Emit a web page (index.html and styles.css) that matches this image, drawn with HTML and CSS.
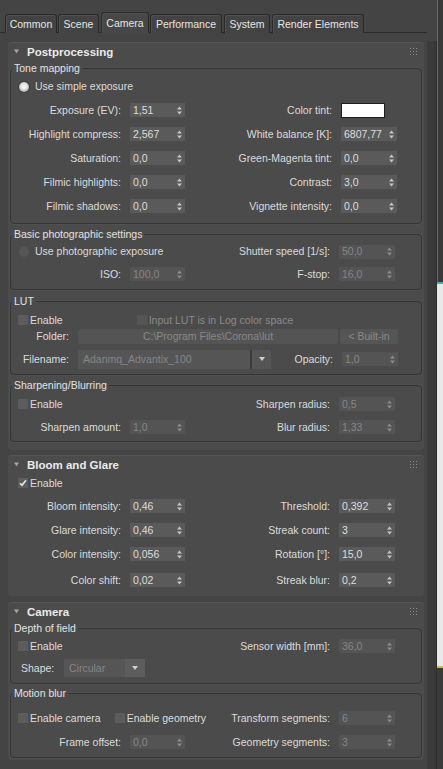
FILE: index.html
```html
<!DOCTYPE html>
<html>
<head>
<meta charset="utf-8">
<link rel="stylesheet" href="styles.css">
</head>
<body>
<div class="app">
  <div class="main">
    <div class="tabbar">
      <div class="tab t-common">Common</div>
      <div class="tab t-scene">Scene</div>
      <div class="tab t-camera active">Camera</div>
      <div class="tab t-perf">Performance</div>
      <div class="tab t-sys">System</div>
      <div class="tab t-re">Render Elements</div>
    </div>

    <section class="rollout r-post">
      <header class="rhead">
        <svg class="tri" viewBox="0 0 6 5"><path d="M0 0H6L3 4.5Z"/></svg>
        <span class="rtitle">Postprocessing</span>
        <svg class="grip" viewBox="0 0 7 7"><g><rect x="0" y="0" width="1" height="1"/><rect x="3" y="0" width="1" height="1"/><rect x="6" y="0" width="1" height="1"/><rect x="0" y="3" width="1" height="1"/><rect x="3" y="3" width="1" height="1"/><rect x="6" y="3" width="1" height="1"/><rect x="0" y="6" width="1" height="1"/><rect x="3" y="6" width="1" height="1"/><rect x="6" y="6" width="1" height="1"/></g></svg>
      </header>

      <fieldset class="group g-tone">
        <legend>Tone mapping</legend>
        <div class="row h23">
          <label class="opt span2"><span class="radio on"></span>Use simple exposure</label>
        </div>
        <div class="row">
          <span class="lbl">Exposure (EV):</span>
          <div class="spin"><span>1,51</span><svg class="arr" viewBox="0 0 5 9"><path d="M0 3.5L2.5 0.5L5 3.5ZM0 5.5L2.5 8.5L5 5.5Z"/></svg></div>
          <span class="lbl">Color tint:</span>
          <div class="swatch"></div>
        </div>
        <div class="row">
          <span class="lbl">Highlight compress:</span>
          <div class="spin"><span>2,567</span><svg class="arr" viewBox="0 0 5 9"><path d="M0 3.5L2.5 0.5L5 3.5ZM0 5.5L2.5 8.5L5 5.5Z"/></svg></div>
          <span class="lbl">White balance [K]:</span>
          <div class="spin"><span>6807,77</span><svg class="arr" viewBox="0 0 5 9"><path d="M0 3.5L2.5 0.5L5 3.5ZM0 5.5L2.5 8.5L5 5.5Z"/></svg></div>
        </div>
        <div class="row">
          <span class="lbl">Saturation:</span>
          <div class="spin"><span>0,0</span><svg class="arr" viewBox="0 0 5 9"><path d="M0 3.5L2.5 0.5L5 3.5ZM0 5.5L2.5 8.5L5 5.5Z"/></svg></div>
          <span class="lbl">Green-Magenta tint:</span>
          <div class="spin"><span>0,0</span><svg class="arr" viewBox="0 0 5 9"><path d="M0 3.5L2.5 0.5L5 3.5ZM0 5.5L2.5 8.5L5 5.5Z"/></svg></div>
        </div>
        <div class="row">
          <span class="lbl">Filmic highlights:</span>
          <div class="spin"><span>0,0</span><svg class="arr" viewBox="0 0 5 9"><path d="M0 3.5L2.5 0.5L5 3.5ZM0 5.5L2.5 8.5L5 5.5Z"/></svg></div>
          <span class="lbl">Contrast:</span>
          <div class="spin"><span>3,0</span><svg class="arr" viewBox="0 0 5 9"><path d="M0 3.5L2.5 0.5L5 3.5ZM0 5.5L2.5 8.5L5 5.5Z"/></svg></div>
        </div>
        <div class="row">
          <span class="lbl">Filmic shadows:</span>
          <div class="spin"><span>0,0</span><svg class="arr" viewBox="0 0 5 9"><path d="M0 3.5L2.5 0.5L5 3.5ZM0 5.5L2.5 8.5L5 5.5Z"/></svg></div>
          <span class="lbl">Vignette intensity:</span>
          <div class="spin"><span>0,0</span><svg class="arr" viewBox="0 0 5 9"><path d="M0 3.5L2.5 0.5L5 3.5ZM0 5.5L2.5 8.5L5 5.5Z"/></svg></div>
        </div>
      </fieldset>

      <fieldset class="group g-basic">
        <legend>Basic photographic settings</legend>
        <div class="row h21">
          <label class="opt span2"><span class="radio"></span>Use photographic exposure</label>
          <span class="lbl">Shutter speed [1/s]:</span>
          <div class="spin off"><span>50,0</span><svg class="arr" viewBox="0 0 5 9"><path d="M0 3.5L2.5 0.5L5 3.5ZM0 5.5L2.5 8.5L5 5.5Z"/></svg></div>
        </div>
        <div class="row">
          <span class="lbl">ISO:</span>
          <div class="spin off"><span>100,0</span><svg class="arr" viewBox="0 0 5 9"><path d="M0 3.5L2.5 0.5L5 3.5ZM0 5.5L2.5 8.5L5 5.5Z"/></svg></div>
          <span class="lbl">F-stop:</span>
          <div class="spin off"><span>16,0</span><svg class="arr" viewBox="0 0 5 9"><path d="M0 3.5L2.5 0.5L5 3.5ZM0 5.5L2.5 8.5L5 5.5Z"/></svg></div>
        </div>
      </fieldset>

      <fieldset class="group g-lut">
        <legend>LUT</legend>
        <div class="lutrow1">
          <label class="chk"><span class="box"></span>Enable</label>
          <label class="chk dis log"><span class="box"></span>Input LUT is in Log color space</label>
        </div>
        <div class="lutrow2">
          <span class="lbl lutlbl">Folder:</span>
          <div class="field">C:\Program Files\Corona\lut</div>
          <div class="btn">&lt; Built-in</div>
        </div>
        <div class="lutrow3">
          <span class="lbl lutlbl">Filename:</span>
          <div class="combo fname"><span>Adanmq_Advantix_100</span><span class="drop"><svg viewBox="0 0 6 4"><path d="M0 0H6L3 4Z"/></svg></span></div>
          <span class="lbl oplbl">Opacity:</span>
          <div class="spin off"><span>1,0</span><svg class="arr" viewBox="0 0 5 9"><path d="M0 3.5L2.5 0.5L5 3.5ZM0 5.5L2.5 8.5L5 5.5Z"/></svg></div>
        </div>
      </fieldset>

      <fieldset class="group g-sharp">
        <legend>Sharpening/Blurring</legend>
        <div class="row">
          <label class="chk span2"><span class="box"></span>Enable</label>
          <span class="lbl">Sharpen radius:</span>
          <div class="spin off"><span>0,5</span><svg class="arr" viewBox="0 0 5 9"><path d="M0 3.5L2.5 0.5L5 3.5ZM0 5.5L2.5 8.5L5 5.5Z"/></svg></div>
        </div>
        <div class="row h22">
          <span class="lbl">Sharpen amount:</span>
          <div class="spin off"><span>1,0</span><svg class="arr" viewBox="0 0 5 9"><path d="M0 3.5L2.5 0.5L5 3.5ZM0 5.5L2.5 8.5L5 5.5Z"/></svg></div>
          <span class="lbl">Blur radius:</span>
          <div class="spin off"><span>1,33</span><svg class="arr" viewBox="0 0 5 9"><path d="M0 3.5L2.5 0.5L5 3.5ZM0 5.5L2.5 8.5L5 5.5Z"/></svg></div>
        </div>
      </fieldset>
    </section>

    <section class="rollout r-bloom">
      <header class="rhead">
        <svg class="tri" viewBox="0 0 6 5"><path d="M0 0H6L3 4.5Z"/></svg>
        <span class="rtitle">Bloom and Glare</span>
        <svg class="grip" viewBox="0 0 7 7"><g><rect x="0" y="0" width="1" height="1"/><rect x="3" y="0" width="1" height="1"/><rect x="6" y="0" width="1" height="1"/><rect x="0" y="3" width="1" height="1"/><rect x="3" y="3" width="1" height="1"/><rect x="6" y="3" width="1" height="1"/><rect x="0" y="6" width="1" height="1"/><rect x="3" y="6" width="1" height="1"/><rect x="6" y="6" width="1" height="1"/></g></svg>
      </header>
      <div class="bloom">
        <div class="row h16">
          <label class="chk span2"><span class="box checked"><svg viewBox="0 0 8 8"><path d="M1 4.2L3 6.3L7 1.2" /></svg></span>Enable</label>
        </div>
        <div class="row first">
          <span class="lbl">Bloom intensity:</span>
          <div class="spin"><span>0,46</span><svg class="arr" viewBox="0 0 5 9"><path d="M0 3.5L2.5 0.5L5 3.5ZM0 5.5L2.5 8.5L5 5.5Z"/></svg></div>
          <span class="lbl">Threshold:</span>
          <div class="spin"><span>0,392</span><svg class="arr" viewBox="0 0 5 9"><path d="M0 3.5L2.5 0.5L5 3.5ZM0 5.5L2.5 8.5L5 5.5Z"/></svg></div>
        </div>
        <div class="row">
          <span class="lbl">Glare intensity:</span>
          <div class="spin"><span>0,46</span><svg class="arr" viewBox="0 0 5 9"><path d="M0 3.5L2.5 0.5L5 3.5ZM0 5.5L2.5 8.5L5 5.5Z"/></svg></div>
          <span class="lbl">Streak count:</span>
          <div class="spin"><span>3</span><svg class="arr" viewBox="0 0 5 9"><path d="M0 3.5L2.5 0.5L5 3.5ZM0 5.5L2.5 8.5L5 5.5Z"/></svg></div>
        </div>
        <div class="row">
          <span class="lbl">Color intensity:</span>
          <div class="spin"><span>0,056</span><svg class="arr" viewBox="0 0 5 9"><path d="M0 3.5L2.5 0.5L5 3.5ZM0 5.5L2.5 8.5L5 5.5Z"/></svg></div>
          <span class="lbl">Rotation [°]:</span>
          <div class="spin"><span>15,0</span><svg class="arr" viewBox="0 0 5 9"><path d="M0 3.5L2.5 0.5L5 3.5ZM0 5.5L2.5 8.5L5 5.5Z"/></svg></div>
        </div>
        <div class="row last">
          <span class="lbl">Color shift:</span>
          <div class="spin"><span>0,02</span><svg class="arr" viewBox="0 0 5 9"><path d="M0 3.5L2.5 0.5L5 3.5ZM0 5.5L2.5 8.5L5 5.5Z"/></svg></div>
          <span class="lbl">Streak blur:</span>
          <div class="spin"><span>0,2</span><svg class="arr" viewBox="0 0 5 9"><path d="M0 3.5L2.5 0.5L5 3.5ZM0 5.5L2.5 8.5L5 5.5Z"/></svg></div>
        </div>
      </div>
    </section>

    <section class="rollout r-cam">
      <header class="rhead">
        <svg class="tri" viewBox="0 0 6 5"><path d="M0 0H6L3 4.5Z"/></svg>
        <span class="rtitle">Camera</span>
        <svg class="grip" viewBox="0 0 7 7"><g><rect x="0" y="0" width="1" height="1"/><rect x="3" y="0" width="1" height="1"/><rect x="6" y="0" width="1" height="1"/><rect x="0" y="3" width="1" height="1"/><rect x="3" y="3" width="1" height="1"/><rect x="6" y="3" width="1" height="1"/><rect x="0" y="6" width="1" height="1"/><rect x="3" y="6" width="1" height="1"/><rect x="6" y="6" width="1" height="1"/></g></svg>
      </header>
      <fieldset class="group g-dof">
        <legend>Depth of field</legend>
        <div class="row h22">
          <label class="chk span2"><span class="box"></span>Enable</label>
          <span class="lbl">Sensor width [mm]:</span>
          <div class="spin off"><span>36,0</span><svg class="arr" viewBox="0 0 5 9"><path d="M0 3.5L2.5 0.5L5 3.5ZM0 5.5L2.5 8.5L5 5.5Z"/></svg></div>
        </div>
        <div class="shaperow">
          <span class="shapelbl">Shape:</span>
          <div class="combo shape"><span>Circular</span><span class="drop light"><svg viewBox="0 0 6 4"><path d="M0 0H6L3 4Z"/></svg></span></div>
        </div>
      </fieldset>
      <fieldset class="group g-mb">
        <legend>Motion blur</legend>
        <div class="row first">
          <div class="checks span2">
            <label class="chk"><span class="box"></span>Enable camera</label>
            <label class="chk"><span class="box"></span>Enable geometry</label>
          </div>
          <span class="lbl">Transform segments:</span>
          <div class="spin off"><span>6</span><svg class="arr" viewBox="0 0 5 9"><path d="M0 3.5L2.5 0.5L5 3.5ZM0 5.5L2.5 8.5L5 5.5Z"/></svg></div>
        </div>
        <div class="row">
          <span class="lbl">Frame offset:</span>
          <div class="spin off"><span>0,0</span><svg class="arr" viewBox="0 0 5 9"><path d="M0 3.5L2.5 0.5L5 3.5ZM0 5.5L2.5 8.5L5 5.5Z"/></svg></div>
          <span class="lbl">Geometry segments:</span>
          <div class="spin off"><span>3</span><svg class="arr" viewBox="0 0 5 9"><path d="M0 3.5L2.5 0.5L5 3.5ZM0 5.5L2.5 8.5L5 5.5Z"/></svg></div>
        </div>
      </fieldset>
    </section>
  </div>
  <div class="scroll"><div class="track"></div></div>
  <div class="viewport">
    <div class="vp-top"></div>
    <div class="vp-mid"></div>
    <div class="vp-bot"></div>
  </div>
</div>
</body>
</html>
```

FILE: styles.css
```css
* { box-sizing: border-box; }
html, body { margin: 0; padding: 0; }
body {
  width: 443px;
  height: 769px;
  overflow: hidden;
  background: #444444;
  color: #dcdcdc;
  font-family: "Liberation Sans", Arial, sans-serif;
  font-size: 10.5px;
  line-height: 13px;
}
.app { display: flex; height: 769px; }
.main { width: 427px; flex: none; }

/* tabs */
.tabbar {
  height: 33px;
  padding: 0 0 0 5px;
  display: flex;
  align-items: flex-end;
  gap: 1px;
  border-bottom: 1px solid #2c2c2c;
}
.tab {
  height: 19px;
  margin-bottom: -1px;
  padding: 3px 0 0;
  text-align: center;
  border: 1px solid #2a2a2a;
  border-bottom: none;
  border-radius: 3px 3px 0 0;
  background: #434343;
  box-shadow: inset 1px 1px 0 #505050;
  color: #e6e6e6;
}
.tab.active {
  height: 21px;
  padding-top: 4px;
  background: #474747;
  margin-bottom: -1px;
  border-bottom: 1px solid #474747;
}
.t-common { width: 52px; }
.t-scene { width: 41px; margin-left: 0; }
.t-camera { width: 48px; margin-left: 1px; }
.t-perf { width: 72px; }
.t-sys { width: 46px; margin-left: 1px; }
.t-re { width: 92px; margin-left: 1px; }

/* rollouts */
.rollout {
  width: 416px;
  margin-left: 8px;
  background: #4b4b4b;
  border-radius: 3px;
  padding: 0 2px;
  box-shadow: inset 0 1px 0 #555;
}
.r-post { margin-top: 9px; padding-bottom: 8px; }
.r-bloom { margin-top: 5px; padding-bottom: 4px; }
.r-cam { margin-top: 6px; padding-bottom: 2px; }
.rhead {
  height: 20px;
  display: flex;
  align-items: center;
  position: relative;
}
.tri { width: 5px; height: 5px; fill: #a8a8a8; margin-left: 4px; margin-top: -1px; }
.rtitle { font-weight: bold; font-size: 11.5px; margin-left: 8px; color: #eaeaea; }
.grip { width: 7px; height: 7px; fill: #8a8a8a; margin-left: auto; margin-right: 5px; margin-top: -2px; }

/* groups */
.group {
  margin: 0;
  padding: 0 0 0 0;
  border: 1px solid #353535;
  border-radius: 4px;
  box-shadow: 0 0 0 1px rgba(255,255,255,0.03);
  min-width: 0;
}
.group legend {
  padding: 0 2px;
  margin-left: 1px;
  line-height: 13px;
  color: #e2e2e2;
}
.g-tone { padding-bottom: 5px; }
.g-basic { margin-top: 4px; padding-bottom: 3px; }
.g-lut { margin-top: 5px; padding-bottom: 5px; }
.g-sharp { margin-top: 4px; padding-bottom: 3px; }
.g-dof { padding-bottom: 4px; }
.g-mb { margin-top: 3px; padding-bottom: 3px; }

.row {
  display: grid;
  grid-template-columns: 110px 55px 136px 56px;
  column-gap: 9px;
  align-items: center;
  height: 24px;
}
.g-tone .row { grid-template-columns: 110px 55px 138px 56px; }
.row.h23 { height: 23px; }
.row.h22 { height: 22px; }
.row.h21 { height: 21px; }
.row.h16 { height: 16px; }
.bloom { padding-left: 1px; }
.bloom .row.first { margin-top: 3px; }
.bloom .row.last { margin-top: 2px; }
.g-mb .row.first { margin-top: 6px; }
.lbl { text-align: right; white-space: nowrap; grid-column: auto; }
.span2 { grid-column: 1 / 3; }

.opt, .chk { display: flex; align-items: center; white-space: nowrap; }
.opt { padding-left: 8px; }
.radio {
  width: 10px; height: 10px; border-radius: 50%;
  background: #575757;
  margin-right: 6px;
  flex: none;
}
.radio.on {
  background: radial-gradient(circle at 50% 45%, #f4f4f4 0 25%, #c9c9c9 55%, #9a9a9a 100%);
  box-shadow: 0 0 0 1px #3e3e3e;
}
.chk { padding-left: 7px; }
.box {
  width: 10px; height: 10px;
  background: #5c5c5c;
  margin-right: 2px;
  flex: none;
  display: flex; align-items: center; justify-content: center;
}
.box svg { width: 8px; height: 8px; fill: none; stroke: #e8e8e8; stroke-width: 1.6; }
.chk.dis { color: #8a8a8a; }
.chk.dis .box { background: #555; }
.checks { display: flex; white-space: nowrap; }
.checks .chk + .chk { padding-left: 14px; }

/* spinner */
.spin {
  height: 14px;
  background: #5a5a5a;
  display: flex;
  align-items: center;
  padding: 0 3px 0 3px;
  color: #dedede;
  overflow: hidden;
}
.spin span { flex: 1; white-space: nowrap; overflow: hidden; }
.spin .arr { width: 5px; height: 9px; fill: #c4c4c4; flex: none; margin-left: 1px; }
.spin.off { background: #545454; color: #868686; }
.spin.off .arr { fill: #8c8c8c; }
.swatch {
  width: 44px; height: 15px;
  background: #ffffff;
  border: 1px solid #1e1e1e;
}

/* LUT */
.lutrow1 { display: flex; height: 18px; margin-top: 3px; align-items: center; }
.lutrow1 .log { padding-left: 0; margin-left: 74px; }
.lutrow2 { display: flex; height: 15px; align-items: center; }
.lutlbl { width: 58px; }
.field {
  margin-left: 9px;
  width: 260px; height: 15px;
  background: #545454;
  color: #888;
  text-align: center;
  line-height: 15px;
  border-radius: 2px;
}
.btn {
  margin-left: 2px;
  width: 58px; height: 15px;
  background: #555;
  color: #8a8a8a;
  text-align: center;
  line-height: 15px;
  border-radius: 2px;
}
.lutrow3 { display: flex; height: 20px; margin-top: 5px; align-items: center; }
.combo {
  display: flex;
  align-items: center;
  background: #555;
  color: #868686;
}
.combo > span:first-child { flex: 1; padding-left: 5px; white-space: nowrap; }
.fname { margin-left: 9px; width: 193px; height: 19px; }
.drop {
  width: 21px; height: 100%;
  display: flex; align-items: center; justify-content: center;
  border-left: 2px solid #3a3a3a;
}
.drop svg { width: 6px; height: 4px; fill: #d0d0d0; }
.drop.light { border-left: none; background: #5d5d5d; width: 20px; }
.oplbl { width: 53px; margin-left: 9px; }
.lutrow3 .spin { width: 56px; margin-left: 9px; }

/* shape */
.shaperow { display: flex; height: 22px; align-items: center; }
.shapelbl { margin-left: 10px; width: 43px; }
.shape { width: 81px; height: 18px; margin-left: 0; }

/* right strip */
.scroll { width: 10px; flex: none; padding-top: 41px; }
.track { height: 100%; background: #3c3c3c; border-right: 1px solid #2e2e2e; box-shadow: inset -3px 0 0 #393939; }
.viewport { flex: 1; display: flex; flex-direction: column; }
.vp-top { height: 282px; background: #393939; border-left: 1px solid #5a6a88; }
.vp-mid { height: 386px; background: #e9e9e9; border-top: 2px solid #3fb0b0; border-bottom: 2px solid #c8c04a; }
.vp-bot { flex: 1; background: #3a3a3a; }
```
